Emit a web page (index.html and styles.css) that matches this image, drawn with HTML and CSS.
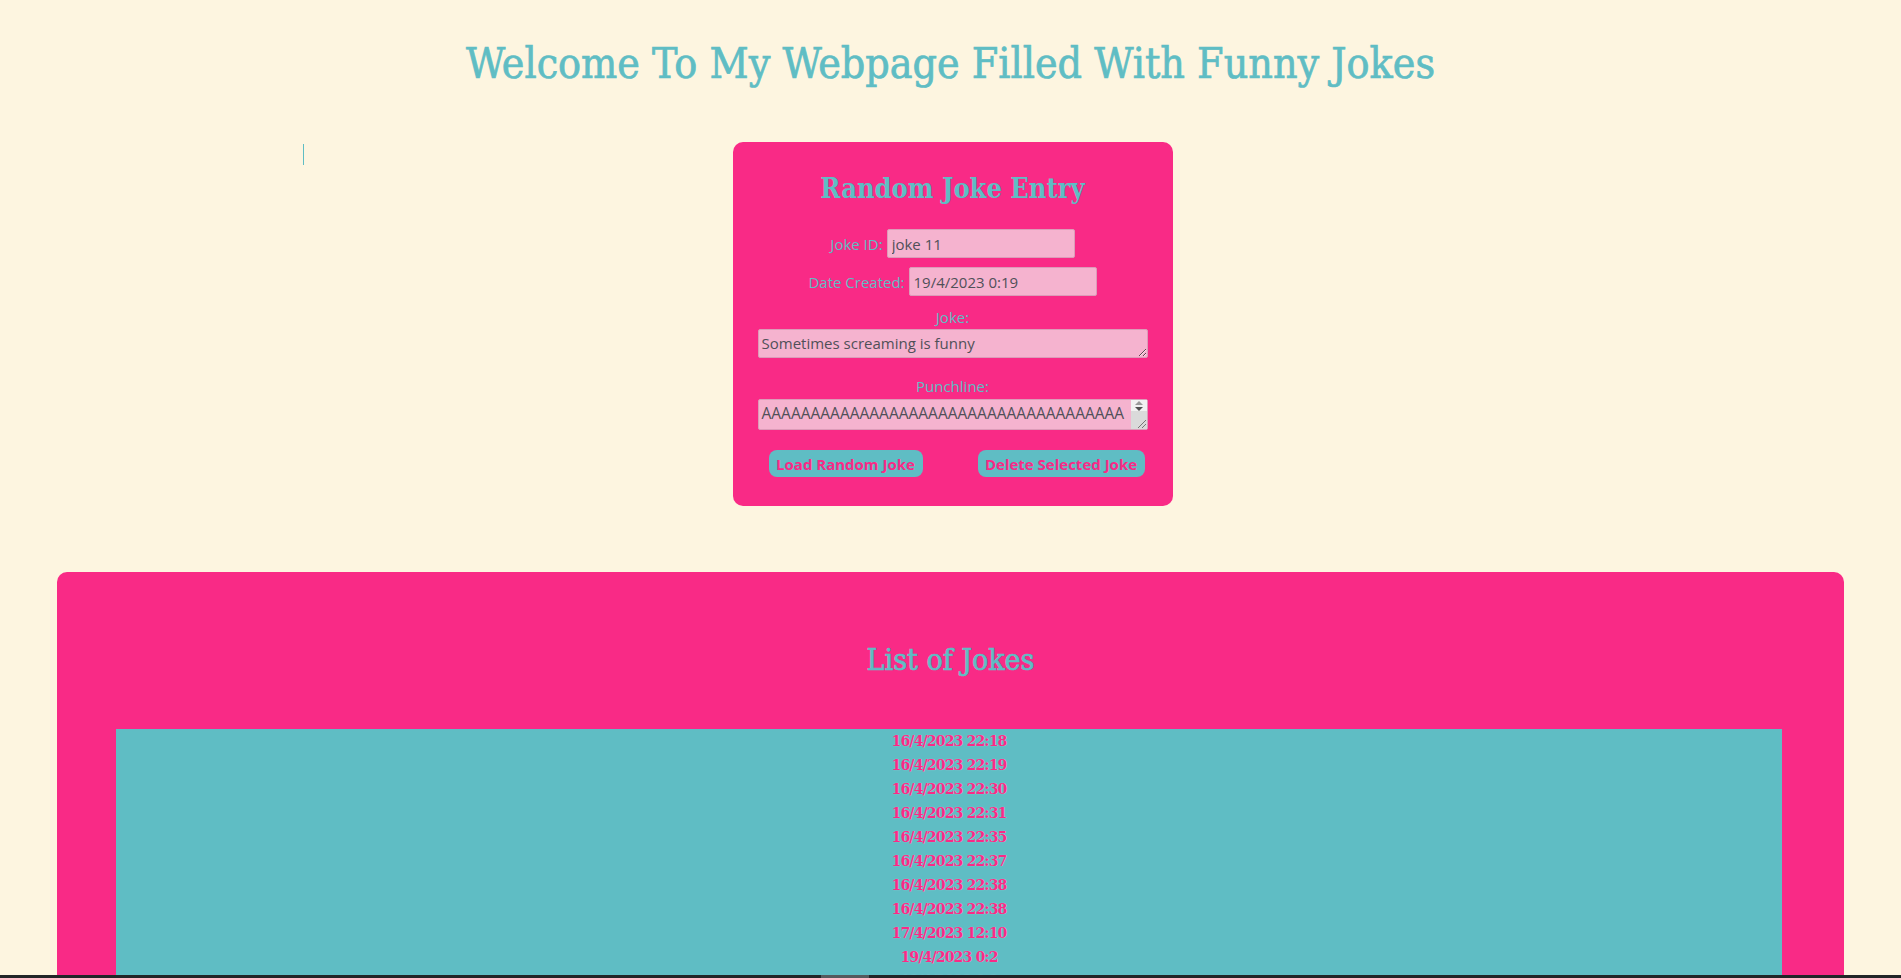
FILE: index.html
```html
<!DOCTYPE html>
<html lang="en">
<head>
<meta charset="utf-8">
<title>Funny Jokes</title>
<link rel="stylesheet" href="styles.css">
</head>
<body>
<h1 class="page-title">Welcome To My Webpage Filled With Funny Jokes</h1>

<div class="entry-area">
  <span class="caret"></span>
  <section class="entry-card">
    <h2 class="card-title">Random Joke Entry</h2>
    <div class="field-row">
      <label class="field-label" for="jokeId">Joke ID:</label>
      <input class="field-input" id="jokeId" type="text" value="joke 11">
    </div>
    <div class="field-row">
      <label class="field-label" for="dateCreated">Date Created:</label>
      <input class="field-input" id="dateCreated" type="text" value="19/4/2023 0:19">
    </div>
    <label class="block-label joke-label" for="joke">Joke:</label>
    <textarea class="field-area joke-area" id="joke">Sometimes screaming is funny</textarea>
    <label class="block-label punch-label" for="punchline">Punchline:</label>
    <div class="punch-wrap">
      <textarea class="field-area punch-area" id="punchline">AAAAAAAAAAAAAAAAAAAAAAAAAAAAAAAAAAAAAAAAAAAAAAAAAAAAAAAAAAAAAAAAAAAAAAAAAAAAAAAAAAAAAAAAAAAAAAAAAAAAAAAAAAA</textarea>
      <div class="fake-scroll">
        <div class="scroll-top">
          <svg class="scroll-arrows" width="10" height="10" viewBox="0 0 10 10">
            <polygon points="5,0 9,4 1,4" fill="#9a9a9a"/>
            <polygon points="1,6 9,6 5,10" fill="#505050"/>
          </svg>
        </div>
        <div class="scroll-bottom">
          <svg class="scroll-grip" width="9" height="9" viewBox="0 0 9 9">
            <line x1="1" y1="9" x2="9" y2="1" stroke="#777" stroke-width="1"/>
            <line x1="5" y1="9" x2="9" y2="5" stroke="#777" stroke-width="1"/>
          </svg>
        </div>
      </div>
    </div>
    <div class="button-row">
      <button class="action-btn load-btn" type="button">Load Random Joke</button>
      <button class="action-btn delete-btn" type="button">Delete Selected Joke</button>
    </div>
  </section>
</div>

<section class="list-card">
  <h2 class="list-title">List of Jokes</h2>
  <ul class="joke-list">
    <li>16/4/2023 22:18</li>
    <li>16/4/2023 22:19</li>
    <li>16/4/2023 22:30</li>
    <li>16/4/2023 22:31</li>
    <li>16/4/2023 22:35</li>
    <li>16/4/2023 22:37</li>
    <li>16/4/2023 22:38</li>
    <li>16/4/2023 22:38</li>
    <li>17/4/2023 12:10</li>
    <li>19/4/2023 0:2</li>
    <li>19/4/2023 0:3</li>
    <li>19/4/2023 0:19</li>
  </ul>
</section>

<div class="bottom-bar"><div class="bottom-thumb"></div></div>
</body>
</html>
```

FILE: styles.css
```css
html, body {
  margin: 0;
  padding: 0;
}

body {
  background: #fdf5e0;
  font-family: "Open Sans", "Noto Sans", sans-serif;
  color: #5fbdc4;
}

.page-title {
  margin: 0;
  padding-top: 39px;
  text-align: center;
  font-family: "DejaVu Serif Condensed", "DejaVu Serif", serif;
  font-stretch: condensed;
  font-weight: 400;
  font-size: 42.5px;
  line-height: 50px;
  color: #5fbdc4;
  -webkit-text-stroke: 0.7px #5fbdc4;
}

.entry-area {
  position: relative;
  margin-top: 53px;
}

.caret {
  position: absolute;
  left: 303px;
  top: 2px;
  width: 1px;
  height: 21px;
  background: #5fbdc4;
}

.entry-card {
  box-sizing: border-box;
  width: 440px;
  margin-left: calc(50% - 218px);
  padding: 30px 0 29px;
  background: #f92a86;
  border-radius: 10px;
  display: flex;
  flex-direction: column;
  align-items: center;
}

.card-title {
  margin: 0;
  font-family: "DejaVu Serif Condensed", "DejaVu Serif", serif;
  font-stretch: condensed;
  font-weight: 700;
  font-size: 27px;
  line-height: 34px;
  color: #5fbdc4;
}

.field-row {
  display: flex;
  align-items: center;
  justify-content: center;
  gap: 4px;
  margin-top: 23px;
}

.field-row + .field-row {
  margin-top: 9px;
}

.field-label,
.block-label {
  font-size: 15px;
  line-height: 20px;
  color: #5fbdc4;
}

.field-input,
.field-area {
  box-sizing: border-box;
  background: #f5b3cf;
  border: 1px solid #dc9bb8;
  border-radius: 2px;
  font-family: "Open Sans", "Noto Sans", sans-serif;
  font-size: 15px;
  color: #505058;
  outline: none;
}

.field-input {
  width: 188px;
  height: 29px;
  padding: 0 4px;
}

.block-label {
  display: block;
  text-align: center;
}

.joke-label {
  margin-top: 11px;
}

.punch-label {
  margin-top: 18px;
}

.field-area {
  display: block;
  width: 390px;
  padding: 2px 3px;
  line-height: 22px;
  resize: both;
}

.joke-area {
  height: 29px;
  margin-top: 2px;
  overflow: hidden;
}

.punch-wrap {
  position: relative;
  margin-top: 3px;
}

.punch-area {
  height: 31px;
  padding-right: 20px;
  overflow: hidden;
  resize: none;
  font-size: 15.5px;
}

.fake-scroll {
  position: absolute;
  top: 1px;
  right: 1px;
  width: 16px;
  height: 29px;
  display: flex;
  flex-direction: column;
}

.scroll-top {
  height: 11px;
  background: #f1f1f1;
  display: flex;
  justify-content: center;
  align-items: center;
}

.scroll-bottom {
  flex: 1;
  background: #dadada;
  display: flex;
  justify-content: flex-end;
  align-items: flex-end;
}

.scroll-grip {
  display: block;
  margin: 0 1px 1px 0;
}

.button-row {
  box-sizing: border-box;
  width: 390px;
  margin-top: 20px;
  padding: 0 3px 0 11px;
  display: flex;
  justify-content: space-between;
}

.action-btn {
  height: 27px;
  padding: 0;
  border: none;
  border-radius: 8px;
  background: #5fbdc4;
  color: #f92a86;
  font-family: "Open Sans", "Noto Sans", sans-serif;
  font-weight: 700;
  font-size: 15px;
  cursor: pointer;
}

.load-btn {
  width: 154px;
}

.delete-btn {
  width: 167px;
}

.list-card {
  margin: 66px 3% 0;
  padding-top: 70px;
  background: #f92a86;
  border-radius: 10px;
}

.list-title {
  margin: 0;
  text-align: center;
  font-family: "DejaVu Serif Condensed", "DejaVu Serif", serif;
  font-stretch: condensed;
  font-weight: 400;
  font-size: 30px;
  line-height: 36px;
  color: #5fbdc4;
  -webkit-text-stroke: 0.7px #5fbdc4;
}

.joke-list {
  list-style: none;
  margin: 51px 62px 0 59px;
  padding: 0 0 24px;
  background: #5fbdc4;
}

.joke-list li {
  text-align: center;
  font-family: "DejaVu Serif Condensed", "DejaVu Serif", serif;
  font-stretch: condensed;
  font-weight: 700;
  font-size: 15.5px;
  letter-spacing: -0.8px;
  line-height: 24px;
  color: #f92a86;
  text-shadow: 0 0 1px rgba(255, 220, 235, 0.7);
}

.bottom-bar {
  position: fixed;
  left: 0;
  right: 0;
  bottom: 0;
  height: 3px;
  background: #222527;
}

.bottom-thumb {
  position: absolute;
  left: 821px;
  top: 0;
  width: 48px;
  height: 3px;
  background: #55595c;
}
```
